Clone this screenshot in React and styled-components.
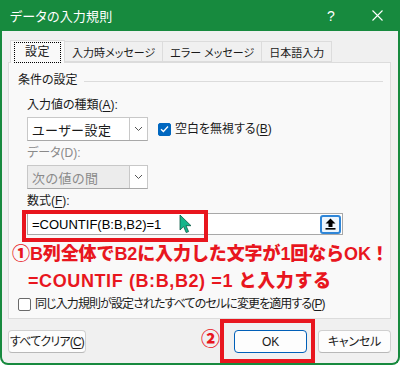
import React from 'react';
import styled, { createGlobalStyle } from 'styled-components';

const GREEN = '#178a3e';
const RED = '#e8161e';
const NOTE = '"Liberation Sans", "Noto Sans CJK JP", sans-serif';
const UI = '"Liberation Sans", "Noto Sans CJK JP", sans-serif';

const GlobalStyle = createGlobalStyle`
	html, body {
		margin: 0;
		padding: 0;
		background: #ffffff;
	}
	body {
		font-family: ${ UI };
		font-size: 12px;
		color: #1a1a1a;
		font-feature-settings: "palt" 1;
	}
`;

const Window = styled.div`
	box-sizing: border-box;
	width: 400px;
	height: 365px;
	border: 2px solid ${ GREEN };
	border-top: 0;
	border-radius: 0 0 8px 8px;
	background: #f0f0f0;
	display: flex;
	flex-direction: column;
	overflow: hidden;
`;

const TitleBar = styled.div`
	height: 31px;
	margin: 0 -2px;
	background: ${ GREEN };
	color: #ffffff;
	display: flex;
	align-items: center;
	padding: 0 0 0 10px;
	font-size: 13px;
`;

const Title = styled.div`
	flex: 1;
	letter-spacing: 0.2px;
`;

const TitleButton = styled.div`
	width: 46px;
	height: 31px;
	display: flex;
	align-items: center;
	justify-content: center;
	font-family: "Liberation Sans", sans-serif;
	font-size: 14px;
`;

const Body = styled.div`
	flex: 1;
	padding: 9px 7px 0 6px;
	display: flex;
	flex-direction: column;
`;

const Tabs = styled.div`
	display: flex;
	align-items: flex-end;
	height: 22px;
	position: relative;
	z-index: 1;
`;

const Tab = styled.div`
	box-sizing: border-box;
	height: ${ ( { selected } ) => ( selected ? '23px' : '21px' ) };
	margin-bottom: ${ ( { selected } ) => ( selected ? '-1px' : '0' ) };
	padding: 0 ${ ( { selected } ) => ( selected ? '3px' : '7px' ) };
	background: ${ ( { selected } ) => ( selected ? '#f9f9f9' : '#f0f0f0' ) };
	border: 1px solid #dcdcdc;
	border-bottom: ${ ( { selected } ) => ( selected ? '0' : '1px solid #dcdcdc' ) };
	margin-left: ${ ( { selected } ) => ( selected ? '2px' : '-1px' ) };
	display: flex;
	align-items: center;
	font-size: ${ ( { selected } ) => ( selected ? '12px' : '11px' ) };
	color: #1a1a1a;
	white-space: nowrap;
`;

const FocusLabel = styled.span`
	border: 1px dotted #000000;
	padding: 1px 10px 2px;
	line-height: 16px;
	letter-spacing: 0.5px;
`;

const Panel = styled.div`
	box-sizing: border-box;
	height: 257px;
	background: #f9f9f9;
	border: 1px solid #dcdcdc;
	padding: 9px 7px 0 9px;
	display: flex;
	flex-direction: column;
`;

const Legend = styled.div`
	display: flex;
	align-items: center;
	gap: 6px;
	line-height: 16px;

	&::after {
		content: '';
		flex: 1;
		height: 1px;
		background: #dcdcdc;
		margin-top: 2px;
	}
`;

const Section = styled.div`
	padding-left: 9px;
	display: flex;
	flex-direction: column;
`;

const Label = styled.div`
	line-height: 16px;
	margin-top: ${ ( { top } ) => top }px;
	color: ${ ( { disabled } ) => ( disabled ? '#8a8a8a' : '#1a1a1a' ) };
	u {
		text-decoration: underline;
		text-underline-offset: 2px;
	}
`;

const Row = styled.div`
	display: flex;
	align-items: center;
	gap: 10px;
	margin-top: 4px;
`;

const Select = styled.div`
	box-sizing: border-box;
	width: 121px;
	height: 24px;
	display: flex;
	background: ${ ( { disabled } ) => ( disabled ? '#ececec' : '#ffffff' ) };
	border: 1px solid #c8c8c8;
	border-bottom-color: #a8a8a8;
	color: ${ ( { disabled } ) => ( disabled ? '#8a8a8a' : '#1a1a1a' ) };
	font-size: 13px;
`;

const SelectValue = styled.div`
	flex: 1;
	padding-left: 4px;
	display: flex;
	align-items: center;
	letter-spacing: 0.5px;
`;

const SelectArrow = styled.div`
	width: 17px;
	background: #ffffff;
	border-left: 1px solid #c8c8c8;
	display: flex;
	align-items: center;
	justify-content: center;
`;

const CheckRow = styled.label`
	display: flex;
	align-items: center;
	gap: 4px;
	line-height: 16px;
	white-space: nowrap;
`;

const CheckText = styled.span`
	letter-spacing: ${ ( { spacing } ) => spacing || 0 }px;
	u {
		text-underline-offset: 2px;
	}
`;

const Box = styled.span`
	box-sizing: border-box;
	width: 13px;
	height: 13px;
	border-radius: 2px;
	background: ${ ( { checked } ) => ( checked ? '#0067c0' : '#ffffff' ) };
	border: 1px solid ${ ( { checked } ) => ( checked ? '#0067c0' : '#6a6a6a' ) };
	display: flex;
	align-items: center;
	justify-content: center;
`;

const FormulaWrap = styled.div`
	position: relative;
	margin-top: 4px;
`;

const FormulaInput = styled.div`
	box-sizing: border-box;
	width: 316px;
	height: 22px;
	background: #ffffff;
	border: 1px solid #a8a8a8;
	display: flex;
	align-items: center;
	padding: 0 1px 0 4px;
	font-family: "Liberation Sans", sans-serif;
	font-size: 13px;
	color: #000000;
`;

const FormulaText = styled.span`
	flex: 1;
`;

const CollapseButton = styled.div`
	box-sizing: border-box;
	width: 21px;
	height: 19px;
	border: 2px solid #2f86d8;
	border-radius: 3px;
	background: #eef6fd;
	display: flex;
	align-items: center;
	justify-content: center;
`;

const RedFrame = styled.span`
	position: absolute;
	left: ${ ( { x } ) => x }px;
	top: ${ ( { y } ) => y }px;
	width: ${ ( { w } ) => w }px;
	height: ${ ( { h } ) => h }px;
	border: 4px solid ${ RED };
	box-sizing: border-box;
	pointer-events: none;
`;

const Pointer = styled.svg`
	position: absolute;
	left: 152px;
	top: 1px;
`;

const Note = styled.div`
	color: ${ RED };
	font-family: ${ NOTE };
	font-feature-settings: normal;
	font-weight: 900;
	font-size: 18px;
	line-height: 27px;
	white-space: nowrap;
	margin-left: ${ ( { indent } ) => indent }px;
	margin-top: ${ ( { top } ) => top }px;
	letter-spacing: ${ ( { spacing } ) => spacing || 0 }px;
`;

const BottomCheck = styled( CheckRow )`
	margin-top: 1px;
`;

const Footer = styled.div`
	display: flex;
	align-items: center;
	margin-top: 11px;
`;

const Button = styled.button`
	box-sizing: border-box;
	height: 23px;
	width: ${ ( { w } ) => w }px;
	border-radius: 4px;
	border: 1px solid ${ ( { primary } ) => ( primary ? '#005fb8' : '#d0d0d0' ) };
	border-bottom-color: ${ ( { primary } ) => ( primary ? '#005fb8' : '#b8b8b8' ) };
	background: #fdfdfd;
	font-family: ${ UI };
	font-feature-settings: "palt" 1;
	font-size: 12px;
	letter-spacing: ${ ( { tight } ) => ( tight ? '-0.8px' : '-0.2px' ) };
	color: #1a1a1a;
	padding: 0;
	line-height: 20px;
	white-space: nowrap;
	u {
		text-underline-offset: 2px;
	}
`;

const Spacer = styled.div`
	flex: 1;
`;

const Circled = styled.span`
	color: ${ RED };
	font-family: "Noto Sans CJK JP", sans-serif;
	font-weight: 900;
	font-size: 19px;
	margin: -8px 14px 0 0;
	line-height: 20px;
`;

const OkWrap = styled.div`
	position: relative;
	margin-right: 11px;
`;

const Chevron = () => (
	<svg width="9" height="6" viewBox="0 0 9 6">
		<path d="M1 1l3.5 3.5L8 1" fill="none" stroke="#555" strokeWidth="1" />
	</svg>
);

const Check = () => (
	<svg width="9" height="8" viewBox="0 0 9 8">
		<path d="M1 4.2l2.4 2.3L8 1.5" fill="none" stroke="#fff" strokeWidth="1.3" />
	</svg>
);

const UpArrow = () => (
	<svg width="11" height="12" viewBox="0 0 11 12">
		<path d="M5.5 0.5L0.5 5.5h3v3.5h4V5.5h3z" fill="#000" />
		<rect x="0.5" y="10" width="10" height="1.6" fill="#000" />
	</svg>
);

const App = () => (
	<>
		<GlobalStyle />
		<Window>
			<TitleBar>
				<Title>データの入力規則</Title>
				<TitleButton>?</TitleButton>
				<TitleButton>
					<svg width="11" height="11" viewBox="0 0 11 11">
						<path d="M0.5 0.5l10 10M10.5 0.5l-10 10" stroke="#fff" strokeWidth="1.1" />
					</svg>
				</TitleButton>
			</TitleBar>
			<Body>
				<Tabs>
					<Tab selected>
						<FocusLabel>設定</FocusLabel>
					</Tab>
					<Tab>入力時メッセージ</Tab>
					<Tab>エラー メッセージ</Tab>
					<Tab>日本語入力</Tab>
				</Tabs>
				<Panel>
					<Legend>条件の設定</Legend>
					<Section>
						<Label top={ 9 }>
							入力値の種類(<u>A</u>):
						</Label>
						<Row>
							<Select>
								<SelectValue>ユーザー設定</SelectValue>
								<SelectArrow>
									<Chevron />
								</SelectArrow>
							</Select>
							<CheckRow>
								<Box checked>
									<Check />
								</Box>
								<CheckText>
									空白を無視する(<u>B</u>)
								</CheckText>
							</CheckRow>
						</Row>
						<Label top={ 4 } disabled>
							データ(D):
						</Label>
						<Row>
							<Select disabled>
								<SelectValue>次の値の間</SelectValue>
								<SelectArrow>
									<Chevron />
								</SelectArrow>
							</Select>
						</Row>
						<Label top={ 4 }>
							数式(<u>F</u>):
						</Label>
						<FormulaWrap>
							<FormulaInput>
								<FormulaText>=COUNTIF(B:B,B2)=1</FormulaText>
								<CollapseButton>
									<UpArrow />
								</CollapseButton>
							</FormulaInput>
							<RedFrame x={ -5 } y={ -3 } w={ 186 } h={ 32 } />
							<Pointer width="13" height="20" viewBox="0 0 13 20">
								<path
									d="M1 1v15l3.6-3.4 2.6 6 2.4-1-2.6-5.9H12z"
									fill="#14b58a"
									stroke="#0b5a44"
									strokeWidth="0.8"
								/>
							</Pointer>
						</FormulaWrap>
					</Section>
					<Note indent={ -6 } top={ 6 } spacing={ -0.1 }>
						①B列全体でB2に入力した文字が1回ならOK！
					</Note>
					<Note indent={ 10 } top={ 0 } spacing={ 0.6 }>
						=COUNTIF (B:B,B2) =1 と入力する
					</Note>
					<BottomCheck>
						<Box />
						<CheckText spacing={ -0.9 }>
							同じ入力規則が設定されたすべてのセルに変更を適用する(<u>P</u>)
						</CheckText>
					</BottomCheck>
				</Panel>
				<Footer>
					<Button w={ 78 } tight>
						すべてクリア(<u>C</u>)
					</Button>
					<Spacer />
					<Circled>②</Circled>
					<OkWrap>
						<Button primary w={ 73 }>OK</Button>
						<RedFrame x={ -14 } y={ -11 } w={ 95 } h={ 44 } />
					</OkWrap>
					<Button w={ 73 }>キャンセル</Button>
				</Footer>
			</Body>
		</Window>
	</>
);

export default App;
